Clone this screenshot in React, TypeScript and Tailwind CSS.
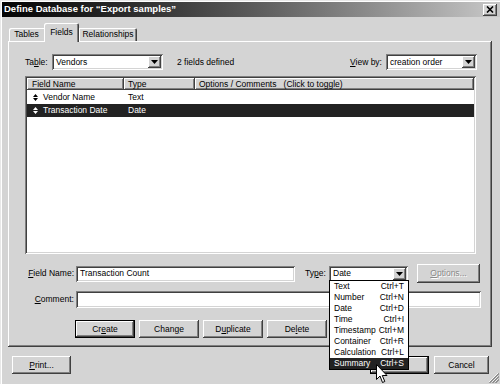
import type { ReactNode } from "react";

const raised =
  "shadow-[inset_-1px_-1px_#404040,inset_1px_1px_#ffffff,inset_-2px_-2px_#808080]";
const sunken =
  "shadow-[inset_1px_1px_#808080,inset_-1px_-1px_#ffffff,inset_2px_2px_#404040,inset_-2px_-2px_#d4d4d4]";

const Arrow = () => (
  <span
    className={`flex h-[12px] w-[13px] shrink-0 items-center justify-center bg-[#d4d4d4] ${raised}`}
  >
    <svg width="7" height="4" viewBox="0 0 7 4">
      <path d="M0 0h7L3.5 4z" fill="#000" />
    </svg>
  </span>
);

const Select = ({ value, className }: { value: string; className: string }) => (
  <div className={`flex h-[16px] items-center bg-white p-[2px] ${sunken} ${className}`}>
    <span className="flex-1 pl-[2px] leading-none">{value}</span>
    <Arrow />
  </div>
);

const U = ({ children }: { children: ReactNode }) => <span className="underline underline-offset-1">{children}</span>;

const Button = ({
  children,
  className = "",
  isDefault = false,
}: {
  children?: ReactNode;
  className?: string;
  isDefault?: boolean;
}) => (
  <div
    className={`flex h-[18px] items-center justify-center bg-[#d4d4d4] ${
      isDefault ? "border border-black" : ""
    } ${raised} ${className}`}
  >
    {children}
  </div>
);

const RowIcon = ({ color }: { color: string }) => (
  <svg width="5" height="7" viewBox="0 0 5 7" className="shrink-0">
    <path d="M2.5 0L5 3H0z M0 4h5L2.5 7z" fill={color} />
  </svg>
);

const menuItems: [string, string][] = [
  ["Text", "Ctrl+T"],
  ["Number", "Ctrl+N"],
  ["Date", "Ctrl+D"],
  ["Time", "Ctrl+I"],
  ["Timestamp", "Ctrl+M"],
  ["Container", "Ctrl+R"],
  ["Calculation", "Ctrl+L"],
  ["Summary", "Ctrl+S"],
];

export default function App() {
  return (
    <div className="relative flex h-[384px] w-[500px] flex-col overflow-hidden bg-[#d4d4d4] font-['Liberation_Sans',Arial,sans-serif] text-[8.5px] text-black shadow-[inset_1px_1px_#e8e8e8,inset_2px_2px_#ffffff]">
      {/* title bar */}
      <div className="mt-[2px] ml-[2px] flex h-[15px] items-center bg-gradient-to-r from-[#050505] via-[#5a5a5a] to-[#c8c8c8] pl-[2px] pr-[3px]">
        <span className="flex-1 text-[9.5px] font-bold text-white">
          Define Database for “Export samples”
        </span>
        <div className={`flex h-[12px] w-[14px] items-center justify-center bg-[#d4d4d4] ${raised}`}>
          <svg width="8" height="7" viewBox="0 0 8 7">
            <path d="M1 0.5L7 6.5M7 0.5L1 6.5" stroke="#000" strokeWidth="1.6" />
          </svg>
        </div>
      </div>

      {/* tabs */}
      <div className="mt-[6px] ml-[9px] flex h-[18px] items-end">
        <div className="flex h-[13px] w-[35px] items-center justify-center rounded-tl-[2px] shadow-[inset_1px_1px_#ffffff]">
          Tables
        </div>
        <div className="relative z-10 -mb-px flex h-[19px] w-[35px] items-start justify-center rounded-t-[2px] bg-[#d4d4d4] pt-[3px] shadow-[inset_1px_1px_#ffffff,inset_-1px_0_#404040,inset_-2px_0_#808080]">
          Fields
        </div>
        <div className="flex h-[13px] w-[58px] items-center justify-center rounded-tr-[2px] shadow-[inset_1px_1px_#ffffff,inset_-1px_0_#404040,inset_-2px_0_#808080]">
          Relationships
        </div>
      </div>

      {/* panel */}
      <div className={`mx-[8px] flex h-[306px] flex-col pt-[13px] pl-[17px] pr-[11px] ${raised}`}>
        <div className="flex h-[16px] items-center">
          <span className="w-[27px]">
            Ta<U>b</U>le:
          </span>
          <Select value="Vendors" className="w-[111px]" />
          <span className="ml-[14px] flex-1">2 fields defined</span>
          <span className="mr-[4px]">
            <U>V</U>iew by:
          </span>
          <Select value="creation order" className="w-[91px] mr-[4px]" />
        </div>

        <div className={`mt-[6px] flex h-[178px] w-[451px] flex-col bg-white p-[2px] ${sunken}`}>
          <div className="flex h-[12px]">
            <div className={`flex w-[97px] items-center bg-[#d4d4d4] pl-[5px] ${raised}`}>Field Name</div>
            <div className={`flex w-[71px] items-center bg-[#d4d4d4] pl-[4px] ${raised}`}>Type</div>
            <div className={`flex flex-1 items-center bg-[#d4d4d4] pl-[4px] ${raised}`}>
              Options / Comments&nbsp;&nbsp;&nbsp;(Click to toggle)
            </div>
          </div>
          <div className="flex h-[14px] items-center">
            <div className="flex w-[97px] items-center gap-[5px] pl-[6px]">
              <RowIcon color="#000" />
              Vendor Name
            </div>
            <div className="pl-[4px]">Text</div>
          </div>
          <div className="flex h-[13px] items-center bg-[#222222] text-white">
            <div className="flex w-[97px] items-center gap-[5px] pl-[6px]">
              <RowIcon color="#fff" />
              Transaction Date
            </div>
            <div className="pl-[4px]">Date</div>
          </div>
        </div>

        <div className="mt-[10px] flex h-[19px] items-center">
          <span className="flex w-[49px] justify-end whitespace-nowrap">
            <U>F</U>ield Name:
          </span>
          <div className={`ml-[2px] flex h-[16px] w-[219px] items-center bg-white pl-[4px] ${sunken}`}>
            Transaction Count
          </div>
          <span className="ml-[10px] w-[24px]">
            Ty<U>p</U>e:
          </span>
          <Select value="Date" className="w-[79px]" />
          <Button className="ml-[9px] w-[63px] h-[19px] text-[#8a8a8a] [text-shadow:1px_1px_#ffffff]">
            <U>O</U>ptions...
          </Button>
        </div>

        <div className="mt-[8px] flex h-[17px] items-center">
          <span className="flex w-[49px] justify-end whitespace-nowrap">
            <U>C</U>omment:
          </span>
          <div className={`ml-[2px] h-[17px] w-[406px] bg-white ${sunken}`} />
        </div>

        <div className="mt-[12px] ml-[50px] flex gap-[4px]">
          <Button isDefault className="w-[60px]">
            Cr<U>e</U>ate
          </Button>
          <Button className="w-[60px]">
            Chan<U>g</U>e
          </Button>
          <Button className="w-[60px]">
            D<U>u</U>plicate
          </Button>
          <Button className="w-[60px]">
            De<U>l</U>ete
          </Button>
        </div>
      </div>

      {/* bottom buttons */}
      <div className="mt-[9px] flex items-center pl-[12px]">
        <Button className="w-[59px]">
          <U>P</U>rint...
        </Button>
        <div className="flex-1" />
        {/* OK button, mostly covered by the open menu */}
        <Button isDefault className="w-[59px]" />
        <Button className="ml-[5px] mr-[11px] w-[55px]">Cancel</Button>
      </div>

      {/* size grip */}
      <svg className="absolute right-[1px] bottom-[1px]" width="11" height="11" viewBox="0 0 11 11">
        <path d="M10 1L1 10M10 4L4 10M10 7L7 10" stroke="#ffffff" strokeWidth="1" />
        <path d="M11 1.5L1.5 11M11 4.5L4.5 11M11 7.5L7.5 11" stroke="#808080" strokeWidth="1.2" />
      </svg>

      {/* open Type menu */}
      <div className="absolute left-[329px] top-[280px] flex w-[80px] flex-col border border-black bg-white">
        {menuItems.map(([label, key]) => (
          <div
            key={label}
            className={`flex h-[11px] items-center justify-between pl-[4px] pr-[4px] ${
              label === "Summary" ? "bg-[#222222] text-white" : ""
            }`}
          >
            <span>{label}</span>
            <span>{key}</span>
          </div>
        ))}
      </div>

      {/* mouse cursor */}
      <svg className="absolute left-[376px] top-[364px]" width="12" height="20" viewBox="0 0 12 20">
        <path
          d="M0.5 0.5V15.5L4 12L6.5 18.5L8.8 17.5L6.3 11.5H11Z"
          fill="#ffffff"
          stroke="#000000"
          strokeWidth="1"
          strokeLinejoin="miter"
        />
      </svg>
    </div>
  );
}
